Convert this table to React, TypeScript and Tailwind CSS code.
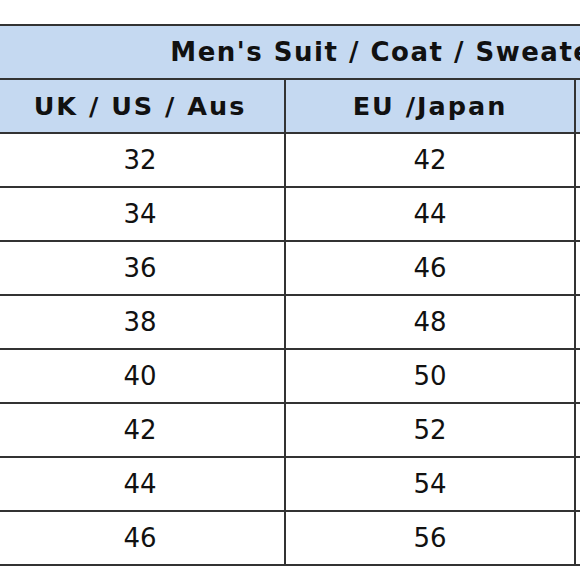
import React from 'react';

const ROWS = [
  ['32', '42', '82'],
  ['34', '44', '86'],
  ['36', '46', '91'],
  ['38', '48', '97'],
  ['40', '50', '102'],
  ['42', '52', '107'],
  ['44', '54', '112'],
  ['46', '56', '117'],
];

export default function App() {
  return (
    <div className="w-[580px] h-[580px] bg-white overflow-hidden pt-[24px]" style={{ fontFamily: '"DejaVu Sans", Verdana, sans-serif' }}>
      <table className="ml-[-6px] w-[870px] table-fixed border-collapse text-[#111]">
        <colgroup>
          <col className="w-[290px]" />
          <col className="w-[290px]" />
          <col className="w-[290px]" />
        </colgroup>
        <thead>
          <tr className="h-[54px] bg-[#c5d9f1]">
            <th colSpan={3} className="border-2 border-[#333] pr-[6px] text-center text-[26px] font-bold tracking-[1.5px]">
              Men's Suit / Coat / Sweater Size
            </th>
          </tr>
          <tr className="h-[54px] bg-[#c5d9f1]">
            <th className="border-2 border-[#333] text-center text-[25.5px] font-bold tracking-[2px]">UK / US / Aus</th>
            <th className="border-2 border-[#333] text-center text-[25.5px] font-bold tracking-[2px]">EU /Japan</th>
            <th className="border-2 border-[#333] text-center text-[25.5px] font-bold tracking-[2px]">Chest (cm)</th>
          </tr>
        </thead>
        <tbody>
          {ROWS.map((r, i) => (
            <tr key={i} className="h-[54px]">
              {r.map((c, j) => (
                <td key={j} className="border-2 border-[#333] text-center text-[26px]">{c}</td>
              ))}
            </tr>
          ))}
        </tbody>
      </table>
    </div>
  );
}
